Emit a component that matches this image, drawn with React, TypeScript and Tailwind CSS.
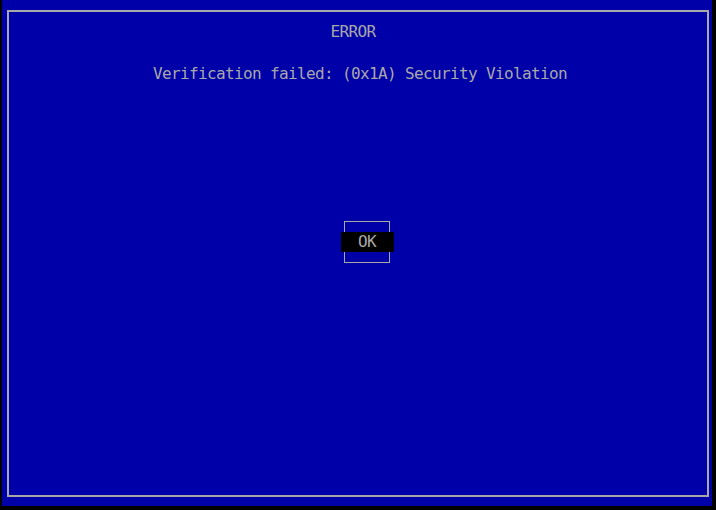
export default function App() {
  const mono = { fontFamily: '"DejaVu Sans Mono", "Liberation Mono", monospace' };

  return (
    <div className="w-[716px] h-[510px] bg-black overflow-hidden" style={mono}>
      {/* Blue console screen */}
      <div className="ml-[2px] w-[710px] h-[506px] bg-[#0000a8] pt-[10px] pl-[5px]">
        {/* Dialog frame */}
        <div className="w-[702px] h-[487px] border-2 border-[#a8a8a8] flex flex-col items-center pt-[12px] text-[#a8a8a8] text-[16px] leading-[16px] tracking-[-0.63px]">
          <div className="mr-[10px]">ERROR</div>
          <div className="mt-[26px] ml-[4px]">Verification failed: (0x1A) Security Violation</div>

          {/* OK button */}
          <div className="mt-[139px] ml-[18px] w-[46px] h-[42px] border border-[#a8a8a8] flex items-center">
            <div className="-ml-[4px] -mr-[5px] h-[20px] flex-1 bg-black flex items-center justify-center pr-[1px]">
              OK
            </div>
          </div>
        </div>
      </div>
    </div>
  );
}
